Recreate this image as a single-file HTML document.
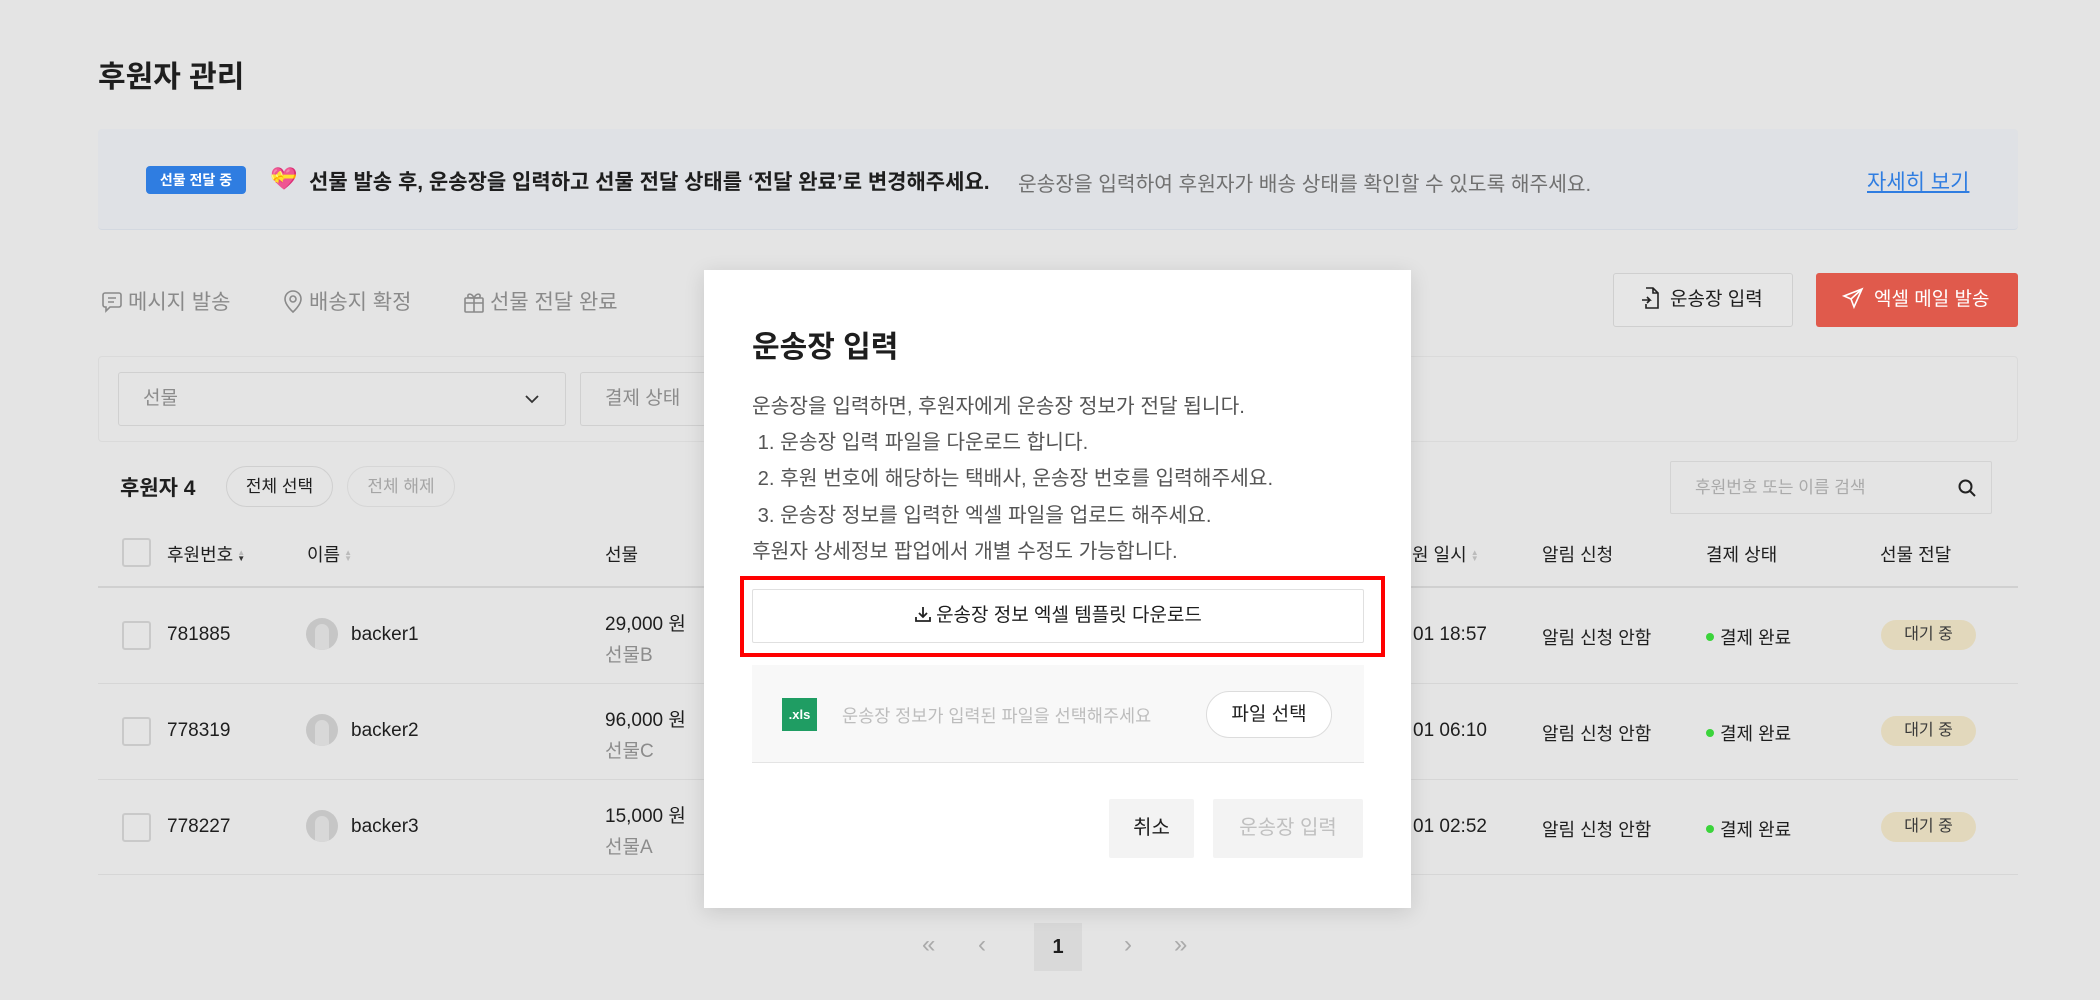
<!DOCTYPE html>
<html><head><meta charset="utf-8">
<style>
*{box-sizing:border-box;margin:0;padding:0}
body{width:2100px;height:1000px;background:#e4e4e4;font-family:"Liberation Sans","Noto Sans CJK KR",sans-serif;color:#1e1e1e;position:relative;overflow:hidden}
.a{position:absolute;white-space:nowrap}
.cb{position:absolute;width:29px;height:29px;border:2px solid #c9c9c9;border-radius:3px;background:#e4e4e4}
.row{font-size:19px}
.av{position:absolute;width:32px;height:32px;border-radius:50%;background:#c6c6c6}
.av:after{content:"";position:absolute;left:9px;top:6px;width:14px;height:26px;border-radius:7px 7px 0 0;background:#d8d8d8}
.dot{display:inline-block;width:8px;height:8px;border-radius:50%;background:#3bd43b;margin-right:6px;vertical-align:middle;position:relative;top:-2px}
.pill{position:absolute;width:95px;height:30px;border-radius:15px;background:#e2d8bc;font-size:16px;text-align:center;line-height:29px;color:#3a3a3a}
.sep{position:absolute;left:98px;width:1920px;height:1px;background:#d6d6d6}
.srt{display:inline-block;vertical-align:middle;margin-left:4px;line-height:6px;font-size:8px;color:#bbb}
</style></head><body>

<div class="a" style="left:98px;top:52px;font-size:30px;font-weight:bold;color:#1e1e1e">후원자 관리</div>

<div class="a" style="left:98px;top:129px;width:1920px;height:101px;background:#dfe1e5;border-radius:4px;border-bottom:1px solid #d3d8e0"></div>
<div class="a" style="left:146px;top:166px;width:100px;height:28px;background:#2f7de1;border-radius:4px;color:#fff;font-size:14px;text-align:center;line-height:28px;font-weight:bold">선물 전달 중</div>
<div class="a" style="left:270px;top:166px;font-size:22px">💝</div>
<div class="a" style="left:309px;top:166px;font-size:21px;font-weight:bold;color:#1e1e1e">선물 발송 후, 운송장을 입력하고 선물 전달 상태를 ‘전달 완료’로 변경해주세요.</div>
<div class="a" style="left:1018px;top:167px;font-size:20.3px;color:#707070">운송장을 입력하여 후원자가 배송 상태를 확인할 수 있도록 해주세요.</div>
<div class="a" style="left:1867px;top:166px;font-size:21px;color:#2f7de1;text-decoration:underline">자세히 보기</div>

<div class="a" style="left:100px;top:286px;font-size:21px;color:#8a8a8a">
<svg width="24" height="24" viewBox="0 0 22 24" style="vertical-align:-5px;margin-right:4px" fill="none" stroke="#8a8a8a" stroke-width="1.6"><path d="M4 3h14a2 2 0 0 1 2 2v10a2 2 0 0 1-2 2H9l-4 4v-4H4a2 2 0 0 1-2-2V5a2 2 0 0 1 2-2z"/><path d="M7 8h8M7 12h6"/></svg>메시지 발송</div>
<div class="a" style="left:281px;top:286px;font-size:21px;color:#8a8a8a">
<svg width="24" height="24" viewBox="0 0 22 24" style="vertical-align:-5px;margin-right:4px" fill="none" stroke="#8a8a8a" stroke-width="1.6"><path d="M11 22s-8-7-8-13a8 8 0 0 1 16 0c0 6-8 13-8 13z"/><circle cx="11" cy="9" r="3"/></svg>배송지 확정</div>
<div class="a" style="left:462px;top:286px;font-size:21px;color:#8a8a8a">
<svg width="24" height="24" viewBox="0 0 22 24" style="vertical-align:-5px;margin-right:4px" fill="none" stroke="#8a8a8a" stroke-width="1.6"><rect x="2" y="8" width="18" height="14" rx="1"/><path d="M2 13h18M11 8v14M11 8c-2-5-7-5-6-1 0 1 3 1 6 1zM11 8c2-5 7-5 6-1 0 1-3 1-6 1z"/></svg>선물 전달 완료</div>

<div class="a" style="left:1613px;top:273px;width:180px;height:54px;border:1px solid #cfcfcf;border-radius:3px;background:#e6e6e6;font-size:19px;line-height:52px;padding-left:26px;color:#1e1e1e">
<svg width="20" height="24" viewBox="0 0 20 24" style="vertical-align:-5px;margin-right:10px" fill="none" stroke="#222" stroke-width="1.6"><path d="M6 2h7l5 5v15H6v-4M13 2v5h5M2 14h8l-3-3M10 14l-3 3"/></svg>운송장 입력</div>
<div class="a" style="left:1816px;top:273px;width:202px;height:54px;background:#e05a4c;border-radius:3px;color:#fff;font-size:19px;line-height:54px;padding-left:26px">
<svg width="22" height="22" viewBox="0 0 22 22" style="vertical-align:-4px;margin-right:10px" fill="none" stroke="#fff" stroke-width="1.6"><path d="M20 2L2 9l7 3 3 8z M20 2L9 12"/></svg>엑셀 메일 발송</div>

<div class="a" style="left:98px;top:356px;width:1920px;height:86px;border:1px solid #dadada;border-radius:4px;background:#e4e4e4"></div>
<div class="a" style="left:118px;top:372px;width:448px;height:54px;border:1px solid #d0d0d0;border-radius:3px;background:#e4e4e4;font-size:19px;color:#8c8c8c;line-height:52px;padding-left:24px">선물
<svg class="a" style="left:405px;top:20px" width="16" height="12" viewBox="0 0 16 12" fill="none" stroke="#333" stroke-width="1.8"><path d="M2 3l6 6 6-6"/></svg></div>
<div class="a" style="left:580px;top:372px;width:140px;height:54px;border:1px solid #d0d0d0;border-right:none;border-radius:3px 0 0 3px;background:#e4e4e4;font-size:19px;color:#8c8c8c;line-height:52px;padding-left:24px">결제 상태</div>

<div class="a" style="left:120px;top:472px;font-size:21px;font-weight:bold">후원자 4</div>
<div class="a" style="left:226px;top:466px;width:107px;height:41px;border:1px solid #cfcfcf;border-radius:21px;font-size:17px;text-align:center;line-height:39px">전체 선택</div>
<div class="a" style="left:347px;top:466px;width:108px;height:41px;border:1px solid #d6d6d6;border-radius:21px;font-size:17px;text-align:center;line-height:39px;color:#a5a5a5">전체 해제</div>
<div class="a" style="left:1670px;top:461px;width:322px;height:53px;border:1px solid #d3d3d3;border-radius:2px;font-size:17px;color:#aaa;line-height:51px;padding-left:24px">후원번호 또는 이름 검색
<svg class="a" style="left:286px;top:16px" width="20" height="20" viewBox="0 0 20 20" fill="none" stroke="#222" stroke-width="2"><circle cx="8.5" cy="8.5" r="6"/><path d="M13 13l5 5"/></svg></div>

<div class="cb" style="left:122px;top:538px"></div>
<div class="a" style="left:167px;top:541px;font-size:18px">후원번호<span class="srt">▲<br><span style="color:#333">▼</span></span></div>
<div class="a" style="left:307px;top:541px;font-size:18px">이름<span class="srt">▲<br>▼</span></div>
<div class="a" style="left:605px;top:541px;font-size:18px">선물</div>
<div class="a" style="left:1412px;top:541px;font-size:18px">원 일시<span class="srt">▲<br>▼</span></div>
<div class="a" style="left:1542px;top:541px;font-size:18px">알림 신청</div>
<div class="a" style="left:1706px;top:541px;font-size:18px">결제 상태</div>
<div class="a" style="left:1880px;top:541px;font-size:18px">선물 전달</div>
<div class="sep" style="top:586px;background:#d0d0d0;height:2px"></div>

<div class="cb" style="left:122px;top:621px"></div>
<div class="a row" style="left:167px;top:624px">781885</div>
<div class="av" style="left:306px;top:618px;overflow:hidden"></div>
<div class="a row" style="left:351px;top:624px">backer1</div>
<div class="a row" style="left:605px;top:609px">29,000 원</div>
<div class="a row" style="left:605px;top:640px;color:#8c8c8c">선물B</div>
<div class="a" style="left:1413px;top:624px;font-size:19px">01 18:57</div>
<div class="a" style="left:1542px;top:624px;font-size:18px">알림 신청 안함</div>
<div class="a" style="left:1706px;top:624px;font-size:18px"><span class="dot"></span>결제 완료</div>
<div class="pill" style="left:1881px;top:620px">대기 중</div>
<div class="sep" style="top:683px"></div>

<div class="cb" style="left:122px;top:717px"></div>
<div class="a row" style="left:167px;top:720px">778319</div>
<div class="av" style="left:306px;top:714px;overflow:hidden"></div>
<div class="a row" style="left:351px;top:720px">backer2</div>
<div class="a row" style="left:605px;top:705px">96,000 원</div>
<div class="a row" style="left:605px;top:736px;color:#8c8c8c">선물C</div>
<div class="a" style="left:1413px;top:720px;font-size:19px">01 06:10</div>
<div class="a" style="left:1542px;top:720px;font-size:18px">알림 신청 안함</div>
<div class="a" style="left:1706px;top:720px;font-size:18px"><span class="dot"></span>결제 완료</div>
<div class="pill" style="left:1881px;top:716px">대기 중</div>
<div class="sep" style="top:779px"></div>

<div class="cb" style="left:122px;top:813px"></div>
<div class="a row" style="left:167px;top:816px">778227</div>
<div class="av" style="left:306px;top:810px;overflow:hidden"></div>
<div class="a row" style="left:351px;top:816px">backer3</div>
<div class="a row" style="left:605px;top:801px">15,000 원</div>
<div class="a row" style="left:605px;top:832px;color:#8c8c8c">선물A</div>
<div class="a" style="left:1413px;top:816px;font-size:19px">01 02:52</div>
<div class="a" style="left:1542px;top:816px;font-size:18px">알림 신청 안함</div>
<div class="a" style="left:1706px;top:816px;font-size:18px"><span class="dot"></span>결제 완료</div>
<div class="pill" style="left:1881px;top:812px">대기 중</div>
<div class="sep" style="top:874px"></div>

<div class="a" style="left:922px;top:931px;font-size:24px;color:#aaa">«</div>
<div class="a" style="left:978px;top:931px;font-size:24px;color:#aaa">‹</div>
<div class="a" style="left:1034px;top:923px;width:48px;height:48px;background:#d9d9d9;text-align:center;line-height:48px;font-size:20px;font-weight:bold">1</div>
<div class="a" style="left:1124px;top:931px;font-size:24px;color:#aaa">›</div>
<div class="a" style="left:1174px;top:931px;font-size:24px;color:#aaa">»</div>

<div class="a" style="left:704px;top:270px;width:707px;height:638px;background:#fff;box-shadow:0 4px 20px rgba(0,0,0,.12)"></div>
<div class="a" style="left:752px;top:322px;font-size:30px;font-weight:bold;color:#1e1e1e">운송장 입력</div>
<div class="a" style="left:752px;top:389px;font-size:20.3px;color:#555;line-height:36.2px">운송장을 입력하면, 후원자에게 운송장 정보가 전달 됩니다.<br>&nbsp;1. 운송장 입력 파일을 다운로드 합니다.<br>&nbsp;2. 후원 번호에 해당하는 택배사, 운송장 번호를 입력해주세요.<br>&nbsp;3. 운송장 정보를 입력한 엑셀 파일을 업로드 해주세요.<br>후원자 상세정보 팝업에서 개별 수정도 가능합니다.</div>
<div class="a" style="left:740px;top:576px;width:645px;height:81px;border:4px solid #f00"></div>
<div class="a" style="left:752px;top:589px;width:612px;height:54px;border:1px solid #e0e0e0;border-radius:2px;text-align:center;line-height:52px;font-size:19px;color:#1e1e1e">
<svg width="18" height="18" viewBox="0 0 18 18" style="vertical-align:-2px;margin-right:4px" fill="none" stroke="#222" stroke-width="1.8"><path d="M9 2v10M5 8l4 4 4-4M2 12v4h14v-4"/></svg>운송장 정보 엑셀 템플릿 다운로드</div>
<div class="a" style="left:752px;top:665px;width:612px;height:98px;background:#f8f8f8;border-bottom:1px solid #e4e4e4"></div>
<div class="a" style="left:782px;top:698px;width:35px;height:33px;background:#1f9d63;color:#fff;font-size:13px;font-weight:bold;text-align:center;line-height:33px">.xls</div>
<div class="a" style="left:842px;top:703px;font-size:17.5px;color:#bdbdbd">운송장 정보가 입력된 파일을 선택해주세요</div>
<div class="a" style="left:1206px;top:691px;width:126px;height:47px;border:1px solid #dcdcdc;border-radius:24px;background:#fff;text-align:center;line-height:45px;font-size:19px;color:#1e1e1e">파일 선택</div>
<div class="a" style="left:1109px;top:799px;width:85px;height:59px;background:#f3f3f3;border-radius:2px;text-align:center;line-height:59px;font-size:20px;color:#1e1e1e">취소</div>
<div class="a" style="left:1213px;top:799px;width:150px;height:59px;background:#f3f3f3;border-radius:2px;text-align:center;line-height:59px;font-size:20px;color:#c0c0c0">운송장 입력</div>

</body></html>
